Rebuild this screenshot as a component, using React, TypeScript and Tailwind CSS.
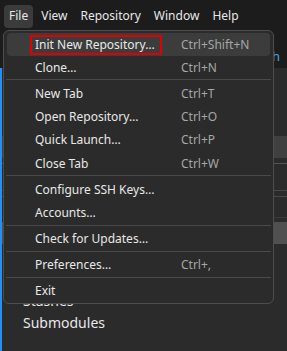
import React from 'react';

type Entry = { label: string; shortcut?: string; hover?: boolean; marked?: boolean } | 'sep';

const entries: Entry[] = [
  { label: 'Init New Repository…', shortcut: 'Ctrl+Shift+N', hover: true, marked: true },
  { label: 'Clone…', shortcut: 'Ctrl+N' },
  'sep',
  { label: 'New Tab', shortcut: 'Ctrl+T' },
  { label: 'Open Repository…', shortcut: 'Ctrl+O' },
  { label: 'Quick Launch…', shortcut: 'Ctrl+P' },
  { label: 'Close Tab', shortcut: 'Ctrl+W' },
  'sep',
  { label: 'Configure SSH Keys…' },
  { label: 'Accounts…' },
  'sep',
  { label: 'Check for Updates…' },
  'sep',
  { label: 'Preferences…', shortcut: 'Ctrl+,' },
  'sep',
  { label: 'Exit' },
];

const menus = ['File', 'View', 'Repository', 'Window', 'Help'];

export default function App() {
  return (
    <div
      className="relative w-[287px] h-[351px] overflow-hidden bg-[#2b2b2b] text-[#e8e8e8]"
      style={{ fontFamily: '"Noto Sans", "Open Sans", sans-serif' }}
    >
      {/* Top: menu bar + toolbar */}
      <div className="bg-[#1c1c1c] h-[68px] flex flex-col">
        <div className="flex items-center h-[31px] pl-[4px] pt-px text-[12px] gap-[3px]">
          {menus.map((m, i) => (
            <div
              key={m}
              className={`h-[23px] flex items-center rounded-[4px] px-[5px] ${
                i === 0 ? 'bg-[#3b3b3b]' : ''
              }`}
            >
              {m}
            </div>
          ))}
        </div>
        <div className="flex-1 flex justify-end items-center pr-[7px] pt-[14px] text-[13px] text-[#4aa3e8]">
          Branch
        </div>
      </div>

      {/* Sidebar content behind the menu */}
      <div className="flex flex-col border-l-2 border-[#1e90ff] h-[283px]">
        <div className="h-[68px]" />
        <div className="h-[22px] bg-[#404040]" />
        <div className="h-[5px]" />
        <div className="h-px bg-[#555555]" />
        <div className="h-[26px]" />
        <div className="h-px bg-[#484848]" />
        <div className="h-[5px]" />
        <div className="h-px bg-[#484848]" />
        <div className="h-[20px]" />
        <div className="h-px bg-[#3a3a3a]" />
        <div className="h-[4px]" />
        <div className="h-[22px] bg-[#505050]" />
        <div className="flex flex-col pl-[21px] text-[14px] leading-[22px] mt-[46px]">
          <div>Stashes</div>
          <div>Submodules</div>
        </div>
      </div>

      {/* File dropdown */}
      <div className="absolute left-[3px] top-[30px] w-[271px] bg-[#2b2b2b] border border-[#4d4d4d] rounded-[6px] pt-[2px] text-[12px]">
        {entries.map((e, i) =>
          e === 'sep' ? (
            <div key={i} className="h-px bg-[#4a4a4a] mx-[2px] mb-[2px]" />
          ) : (
            <div
              key={i}
              className={`h-[23.2px] mx-[3px] rounded-[4px] flex items-center pl-[28px] ${
                e.hover ? 'bg-[#3c3c3c]' : ''
              }`}
            >
              <div className="w-[146px] flex items-center">
                {e.marked ? (
                  <span className="h-[20px] flex items-center border-2 border-[#e00000] -ml-[5px] pl-[3px] pr-[5px]">
                    {e.label}
                  </span>
                ) : (
                  e.label
                )}
              </div>
              {e.shortcut && <div className="text-[#a6a6a6]">{e.shortcut}</div>}
            </div>
          )
        )}
      </div>
    </div>
  );
}
